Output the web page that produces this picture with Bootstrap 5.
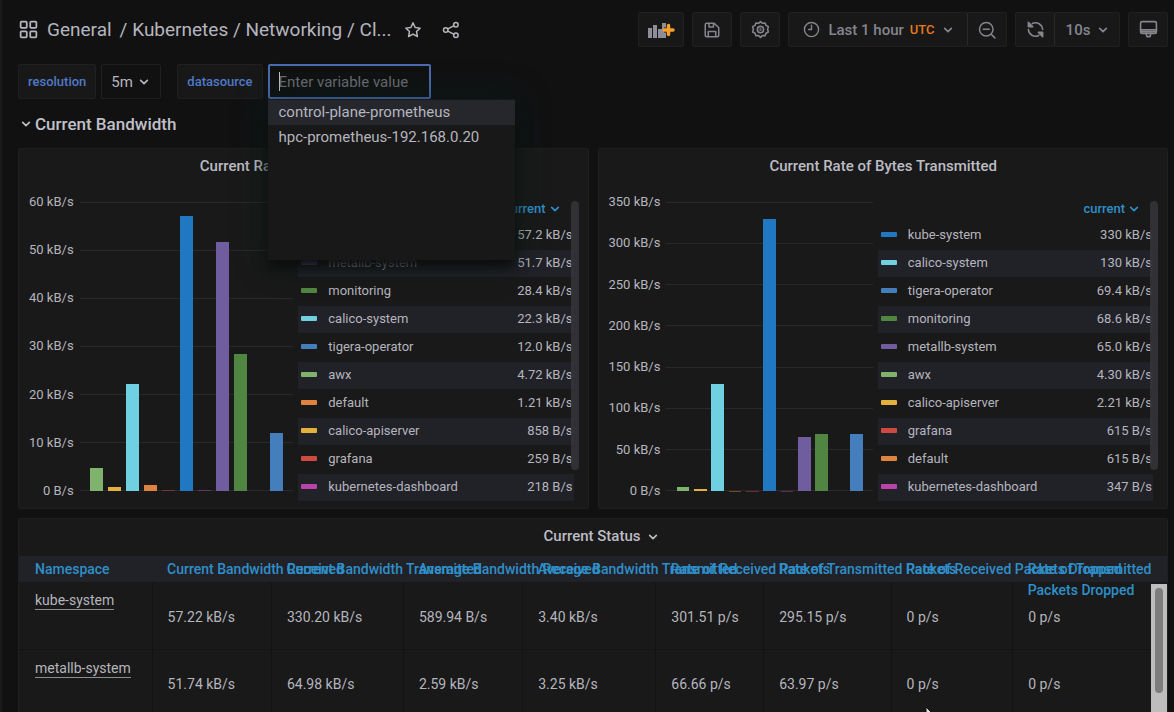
<!DOCTYPE html>
<html lang="en" data-bs-theme="dark">
<head>
<meta charset="utf-8">
<meta name="viewport" content="width=device-width, initial-scale=1">
<title>Kubernetes / Networking / Cluster</title>
<link href="https://cdn.jsdelivr.net/npm/bootstrap@5.3.0/dist/css/bootstrap.min.css" rel="stylesheet">
<style>
  :root { --canvas:#111112; --panel:#191919; --text:#b5b5be; --muted:#85858d; --blue:#5079c8; --cyan:#2f8fc8; --band:#212128; }
  body { background:var(--canvas); color:var(--text); font-family:Roboto,"Liberation Sans",sans-serif; font-size:13px; line-height:20px; border-left:2px solid #1a1a1b; }
  a { color:inherit; text-decoration:none; }
  svg { display:block; flex:none; }
  .stroke { fill:none; stroke:currentColor; stroke-width:2; stroke-linecap:round; stroke-linejoin:round; }
  .dash { padding:12px 6px 0 16px; }
  .crumbs { font-size:19px; line-height:24px; margin-right:12px; }
  .tool { height:35px; background:#181819; border:1px solid #202022; border-radius:2px; color:var(--muted); padding:0; display:flex; align-items:center; justify-content:center; gap:8px; font-size:15px; font-weight:500; }
  .tool-sm { width:40px; }
  .tool-add { width:46px; }
  .tool-range { width:180px; }
  .tool-every { width:66px; }
  .split .tool + .tool { border-left-color:#29292b; margin-left:-1px; }
  .utc { color:#e8791c; font-size:13px; margin-left:-2px; }
  .vars { margin-top:17px; }
  .var-name, .var-pick, .var-input { height:35px; border:1px solid #202022; border-radius:2px; }
  .var-name { background:#181819; color:var(--blue); font-size:13px; font-weight:500; padding:0 9px; display:flex; align-items:center; margin-right:5px; }
  .var-pick { background:var(--canvas); color:var(--text); font-size:15px; padding:0 9px; display:flex; align-items:center; gap:6px; width:60px; margin-right:16px; }
  .var-input { width:163px; background:var(--canvas); border:2px solid #4b6cb0; color:var(--text); font-size:15px; padding:0 9px; outline:0; }
  .var-input::placeholder { color:#6d6d74; opacity:1; }
  .caret-bar { left:11px; top:8px; width:1px; height:19px; background:#c4c4cc; }
  .suggest { left:0; top:35px; width:247px; height:161px; background:#181818; padding:1px 0; z-index:5; box-shadow:0 8px 12px #0c0d0d, 0 0 28px 4px rgba(8,40,32,.4); }
  .suggest button { display:block; width:100%; height:25px; border:0; background:none; color:var(--text); font-size:15px; line-height:25px; text-align:left; padding:0 11px; }
  .suggest .current { background:#26262d; }
  .section-head { margin-top:12px; height:25px; padding:0 3px; border:0; background:none; color:#c0c0c9; font-size:17px; font-weight:500; gap:4px; }
  .panel { background:var(--panel); border:1px solid #1f1f21; border-radius:2px; }
  .pair { display:grid; grid-template-columns:1fr 1fr; gap:9px; margin-top:12px; }
  .graph { height:361px; padding:0 9px 0 10px; }
  .panel-title { font-size:15px; line-height:34px; font-weight:500; text-align:center; margin:0; color:#bcbcc5; }
  .axis { height:289px; margin-top:19px; font-size:13px; line-height:16px; text-align:right; }
  .axis span { display:block; margin:-8px 0; }
  .plot { flex:1; display:grid; height:289px; margin:19px 5px 0 6px; }
  .plot > div { grid-area:1/1; }
  .rules i { height:1px; background:#29292c; }
  .bars { padding:0 8px; }
  .bars div { flex:1; display:flex; align-items:flex-end; justify-content:center; }
  .bars i { width:74%; }
  .legend-box { width:51%; padding:14px 5px 0 0; }
  .legend-box table { width:100%; }
  .legend-box th { height:24px; padding:0; text-align:right; color:var(--cyan); font-weight:500; }
  .legend-box th button { border:0; background:none; color:inherit; font-weight:500; font-size:13px; padding:0 14px 0 0; display:inline-flex; align-items:center; gap:4px; }
  .legend-box td { height:28px; padding:0; border-top:1px solid var(--panel); }
  .legend-box tbody tr:nth-child(even) { background:var(--band); }
  .legend-box td:last-child { text-align:right; padding-right:1px; white-space:nowrap; }
  .swatch { display:inline-block; width:16px; height:5px; border-radius:1px; margin:0 11px 2px 3px; vertical-align:middle; }
  .thumb-dark { right:0; top:18px; width:8px; height:269px; border-radius:4px; background:#35353b; opacity:.85; }
  .status { margin-top:9px; height:320px; overflow:hidden; position:relative; }
  .status .panel-title { padding:0 0 2px 16px; line-height:35px; }
  .status table { width:100%; table-layout:fixed; font-size:14px; }
  .status th { height:26px; padding:0 0 0 15px; background:#212128; color:var(--cyan); font-weight:500; line-height:21px; white-space:nowrap; }
  .status th div { height:21px; }
  .status th:first-child, .status td:first-child { padding-left:16px; }
  .status td { height:67px; padding:3px 0 0 15px; border-bottom:1px solid #131314; border-right:1px solid #131314; }
  .status td:first-child { vertical-align:top; padding-top:8px; }
  .status td a { display:inline-block; line-height:18px; border-bottom:1px solid #8c8c92; }
  .track { right:0; top:65px; bottom:0; width:16px; background:#bdbdbd; padding:4px; }
  .track div { height:105px; border-radius:4px; background:#7d7d7d; }
  .pointer { right:230px; top:187px; }
  .clip { height:100vh; overflow:hidden; }
</style>
</head>
<body>
<div class="clip">
<main class="dash">
  <header class="d-flex justify-content-between align-items-center">
    <div class="d-flex align-items-center">
      <svg class="stroke me-2" width="21" height="21" viewBox="0 0 24 24"><rect x="3" y="3" width="7" height="7" rx="1"/><rect x="14" y="3" width="7" height="7" rx="1"/><rect x="3" y="14" width="7" height="7" rx="1"/><rect x="14" y="14" width="7" height="7" rx="1"/></svg>
      <nav class="crumbs d-flex" aria-label="Breadcrumb"><a href="#">General</a><span class="ms-2">/&nbsp;</span><a href="#">Kubernetes / Networking / Cl...</a></nav>
      <a href="#" aria-label="Star"><svg class="stroke" width="18" height="18" viewBox="0 0 24 24"><path d="M12 2.5l2.9 6.1 6.600.9-4.8 4.600 1.200 6.600-5.900-3.200-5.900 3.200 1.200-6.600-4.800-4.600 6.600-.9z"/></svg></a>
      <a href="#" class="ms-3" aria-label="Share"><svg class="stroke ms-1" width="18" height="18" viewBox="0 0 24 24"><circle cx="5" cy="12" r="3"/><circle cx="18.500" cy="5" r="3"/><circle cx="18.500" cy="19" r="3"/><path d="M7.700 10.600l8-4.200M7.700 13.400l8 4.200"/></svg></a>
    </div>
    <div class="d-flex gap-2">
      <button class="tool tool-add" aria-label="Add panel"><svg width="28" height="18" viewBox="0 0 28 18"><g fill="#8e8e9a"><rect x="1" y="7" width="4" height="10"/><rect x="6" y="4" width="4" height="13"/><rect x="11" y="8" width="4" height="9"/><rect x="15" y="2" width="4" height="15"/></g><path d="M21.500 4.500v9M17 9h9" stroke="#181819" stroke-width="5"/><path d="M21.500 4.500v9M17 9h9" stroke="#f6a02c" stroke-width="3.500" stroke-linecap="round"/></svg></button>
      <button class="tool tool-sm" aria-label="Save"><svg class="stroke" width="18" height="18" viewBox="0 0 24 24"><path d="M5 3h10l6 6v10a2 2 0 0 1-2 2H5a2 2 0 0 1-2-2V5a2 2 0 0 1 2-2zM8 3v5h6V3M7 21v-7h10v7"/></svg></button>
      <button class="tool tool-sm" aria-label="Settings"><svg class="stroke" width="19" height="19" viewBox="0 0 24 24"><path d="M12 2l2.500 2.200 3.300-.5 1.100 3.100 3 1.600-.9 3.400.9 3.300-3 1.700-1.100 3.100-3.300-.4L12 22l-2.500-2.500-3.300.4-1.100-3.100-3-1.700.9-3.300-.9-3.400 3-1.600 1.100-3.100 3.300.5z"/><circle cx="12" cy="12" r="4"/><circle cx="12" cy="12" r=".5"/></svg></button>
      <div class="split d-flex">
        <button class="tool tool-range"><svg class="stroke" width="17" height="17" viewBox="0 0 24 24"><circle cx="12" cy="12" r="10"/><path d="M12 6v6H8"/></svg><span>Last 1 hour</span><span class="utc">UTC</span><svg class="stroke" width="10" height="10" viewBox="0 0 12 12"><path d="M2 4l4 4 4-4"/></svg></button>
        <button class="tool tool-sm" aria-label="Zoom out"><svg class="stroke" width="18" height="18" viewBox="0 0 24 24"><circle cx="11" cy="11" r="9"/><path d="M7 11h8M18 18l4.500 4.500"/></svg></button>
      </div>
      <div class="split d-flex">
        <button class="tool tool-sm" aria-label="Refresh"><svg class="stroke" width="19" height="19" viewBox="0 0 24 24"><path d="M8 4.500a9 9 0 0 1 13 7.500M16 19.500a9 9 0 0 1-13-7.500"/><path fill="currentColor" d="M3 3v5.500h5.500zM21 21v-5.500h-5.500z"/></svg></button>
        <button class="tool tool-every">10s<svg class="stroke" width="10" height="10" viewBox="0 0 12 12"><path d="M2 4l4 4 4-4"/></svg></button>
      </div>
      <button class="tool tool-sm" aria-label="Cycle view mode"><svg class="stroke" width="19" height="19" viewBox="0 0 24 24"><rect x="2" y="2" width="20" height="15" rx="2"/><path d="M2 12.500h20M2.500 15h19M9 17l1 4h4l1-4"/></svg></button>
    </div>
  </header>

  <div class="vars d-flex">
    <label class="var-name" for="res">resolution</label>
    <button class="var-pick" id="res">5m<svg class="stroke" width="10" height="10" viewBox="0 0 12 12"><path d="M2 4l4 4 4-4"/></svg></button>
    <label class="var-name" for="ds">datasource</label>
    <div class="position-relative">
      <input class="var-input" id="ds" type="text" placeholder="Enter variable value">
      <span class="caret-bar position-absolute"></span>
      <div class="suggest position-absolute">
        <button class="current">control-plane-prometheus</button>
        <button>hpc-prometheus-192.168.0.20</button>
      </div>
    </div>
  </div>

  <button class="section-head d-flex align-items-center"><svg class="stroke" width="10" height="10" viewBox="0 0 12 12"><path d="M2 4l4 4 4-4"/></svg>Current Bandwidth</button>

  <div class="pair">
    <section class="panel graph" id="received"><h2 class="panel-title">Current Rate of Bytes Received</h2></section>
    <section class="panel graph" id="transmitted"><h2 class="panel-title">Current Rate of Bytes Transmitted</h2></section>
  </div>

  <section class="panel status">
    <h2 class="panel-title d-flex justify-content-center align-items-center gap-2">Current Status<svg class="stroke" width="10" height="10" viewBox="0 0 12 12"><path d="M2 4l4 4 4-4"/></svg></h2>
    <table>
      <colgroup><col style="width:11.6%"><col style="width:10.4%"><col style="width:11.5%"><col style="width:10.4%"><col style="width:11.6%"><col style="width:9.4%"><col style="width:11.1%"><col style="width:10.6%"><col style="width:13.4%"></colgroup>
      <thead><tr><th>Namespace</th><th>Current Bandwidth Received</th><th>Current Bandwidth Transmitted</th><th>Average Bandwidth Received</th><th>Average Bandwidth Transmitted</th><th>Rate of Received Packets</th><th>Rate of Transmitted Packets</th><th>Rate of Received Packets Dropped</th><th><div>Rate of Transmitted<br>Packets Dropped</div></th></tr></thead>
      <tbody>
        <tr><td><a href="#">kube-system</a></td><td>57.22 kB/s</td><td>330.20 kB/s</td><td>589.94 B/s</td><td>3.40 kB/s</td><td>301.51 p/s</td><td>295.15 p/s</td><td>0 p/s</td><td>0 p/s</td></tr>
        <tr><td><a href="#">metallb-system</a></td><td>51.74 kB/s</td><td>64.98 kB/s</td><td>2.59 kB/s</td><td>3.25 kB/s</td><td>66.66 p/s</td><td>63.97 p/s</td><td>0 p/s</td><td>0 p/s</td></tr>
      </tbody>
    </table>
    <div class="track position-absolute"><div></div></div>
    <svg class="pointer position-absolute" width="12" height="18" viewBox="0 0 12 18"><path d="M1 1v13l3-3 2 5 2-1-2-5h4z" fill="#ddd" stroke="#111"/></svg>
  </section>
</main>
</div>

<script src="https://cdn.jsdelivr.net/npm/bootstrap@5.3.0/dist/js/bootstrap.bundle.min.js"></script>
<script>
  const colors = { 'awx':'#7eb26d', 'calico-apiserver':'#e3b23c', 'calico-system':'#6ed0e0', 'default':'#e0833f', 'grafana':'#cf4a43', 'kube-system':'#1f78c1', 'kubernetes-dashboard':'#ba43a9', 'metallb-system':'#705da0', 'monitoring':'#508642', 'tigera-operator':'#447ebc' };
  const order = ['awx','calico-apiserver','calico-system','default','grafana','kube-system','kubernetes-dashboard','metallb-system','monitoring','','tigera-operator'];
  const toKb = v => parseFloat(v) / (v.includes('kB') ? 1 : 1000);

  function drawGraph(id, max, step, rows) {
    const values = Object.fromEntries(rows);
    const ticks = [];
    for (let t = max; t >= 0; t -= step) ticks.push(t ? t + ' kB/s' : '0 B/s');
    const bar = n => { const share = toKb(values[n]) / max; return `<div><i style="height:${share * 100}%;background:${colors[n]};opacity:${share < .005 ? .45 : 1}"></i></div>`; };
    const bars = order.map(n => n ? bar(n) : '<div></div>').join('');
    const body = rows.map(([n, v]) => `<tr><td><span class="swatch" style="background:${colors[n]}"></span>${n}</td><td>${v}</td></tr>`).join('');
    document.getElementById(id).insertAdjacentHTML('beforeend', `
      <div class="d-flex">
        <div class="axis d-flex flex-column justify-content-between">${ticks.map(t => `<span>${t}</span>`).join('')}</div>
        <div class="plot"><div class="rules d-flex flex-column justify-content-between">${ticks.map(() => '<i></i>').join('')}</div><div class="bars d-flex">${bars}</div></div>
        <div class="legend-box position-relative"><table><thead><tr><th colspan="2"><button>current<svg class="stroke" width="10" height="10" viewBox="0 0 12 12"><path d="M2 4l4 4 4-4"/></svg></button></th></tr></thead><tbody>${body}</tbody></table><div class="thumb-dark position-absolute"></div></div>
      </div>`);
  }
  drawGraph('received', 60, 10, [['kube-system','57.2 kB/s'],['metallb-system','51.7 kB/s'],['monitoring','28.4 kB/s'],['calico-system','22.3 kB/s'],['tigera-operator','12.0 kB/s'],['awx','4.72 kB/s'],['default','1.21 kB/s'],['calico-apiserver','858 B/s'],['grafana','259 B/s'],['kubernetes-dashboard','218 B/s']]);
  drawGraph('transmitted', 350, 50, [['kube-system','330 kB/s'],['calico-system','130 kB/s'],['tigera-operator','69.4 kB/s'],['monitoring','68.6 kB/s'],['metallb-system','65.0 kB/s'],['awx','4.30 kB/s'],['calico-apiserver','2.21 kB/s'],['grafana','615 B/s'],['default','615 B/s'],['kubernetes-dashboard','347 B/s']]);
</script>
</body>
</html>
